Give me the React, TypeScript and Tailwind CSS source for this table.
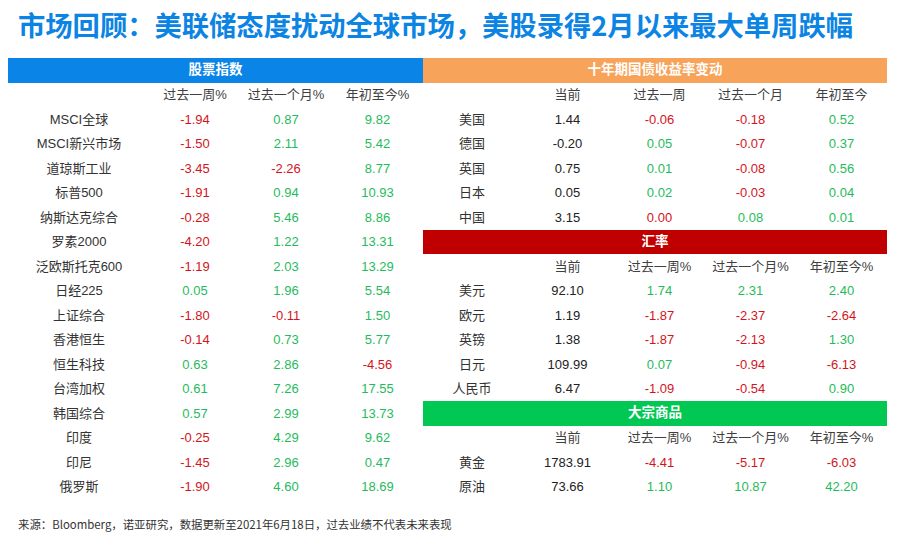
const UP = "text-[#1fbb5c]";
const DOWN = "text-[#d4141c]";

type Row = { name: string; vals: string[] };

const equities: Row[] = [
  { name: "MSCI全球", vals: ["-1.94", "0.87", "9.82"] },
  { name: "MSCI新兴市场", vals: ["-1.50", "2.11", "5.42"] },
  { name: "道琼斯工业", vals: ["-3.45", "-2.26", "8.77"] },
  { name: "标普500", vals: ["-1.91", "0.94", "10.93"] },
  { name: "纳斯达克综合", vals: ["-0.28", "5.46", "8.86"] },
  { name: "罗素2000", vals: ["-4.20", "1.22", "13.31"] },
  { name: "泛欧斯托克600", vals: ["-1.19", "2.03", "13.29"] },
  { name: "日经225", vals: ["0.05", "1.96", "5.54"] },
  { name: "上证综合", vals: ["-1.80", "-0.11", "1.50"] },
  { name: "香港恒生", vals: ["-0.14", "0.73", "5.77"] },
  { name: "恒生科技", vals: ["0.63", "2.86", "-4.56"] },
  { name: "台湾加权", vals: ["0.61", "7.26", "17.55"] },
  { name: "韩国综合", vals: ["0.57", "2.99", "13.73"] },
  { name: "印度", vals: ["-0.25", "4.29", "9.62"] },
  { name: "印尼", vals: ["-1.45", "2.96", "0.47"] },
  { name: "俄罗斯", vals: ["-1.90", "4.60", "18.69"] },
];

const bonds: Row[] = [
  { name: "美国", vals: ["1.44", "-0.06", "-0.18", "0.52"] },
  { name: "德国", vals: ["-0.20", "0.05", "-0.07", "0.37"] },
  { name: "英国", vals: ["0.75", "0.01", "-0.08", "0.56"] },
  { name: "日本", vals: ["0.05", "0.02", "-0.03", "0.04"] },
  { name: "中国", vals: ["3.15", "0.00", "0.08", "0.01"] },
];

const fx: Row[] = [
  { name: "美元", vals: ["92.10", "1.74", "2.31", "2.40"] },
  { name: "欧元", vals: ["1.19", "-1.87", "-2.37", "-2.64"] },
  { name: "英镑", vals: ["1.38", "-1.87", "-2.13", "1.30"] },
  { name: "日元", vals: ["109.99", "0.07", "-0.94", "-6.13"] },
  { name: "人民币", vals: ["6.47", "-1.09", "-0.54", "0.90"] },
];

const commodities: Row[] = [
  { name: "黄金", vals: ["1783.91", "-4.41", "-5.17", "-6.03"] },
  { name: "原油", vals: ["73.66", "1.10", "10.87", "42.20"] },
];

// 中国 0.00 is shown red in the source
function tone(v: string, forceDown?: boolean) {
  if (forceDown || v.startsWith("-")) return DOWN;
  return UP;
}

function Bar({ title, color }: { title: string; color: string }) {
  return (
    <div
      className={`h-[24.5px] flex items-center justify-center text-white font-bold text-[13.5px] ${color}`}
    >
      {title}
    </div>
  );
}

const rightCols = "grid grid-cols-[98px_93px_91px_91px_91px]";
const leftCols = "grid grid-cols-[142px_90px_92px_91px]";

function RightHeader({ labels }: { labels: string[] }) {
  return (
    <div className={`${rightCols} h-[24.5px] items-center text-center text-[13px] text-[#404040]`}>
      <span />
      {labels.map((l) => (
        <span key={l}>{l}</span>
      ))}
    </div>
  );
}

function RightRows({ rows, redZero }: { rows: Row[]; redZero?: boolean }) {
  return (
    <>
      {rows.map((r) => (
        <div
          key={r.name}
          className={`${rightCols} h-[24.5px] items-center text-center text-[13px]`}
        >
          <span className="text-[#333]">{r.name}</span>
          <span className="text-[#222]">{r.vals[0]}</span>
          {r.vals.slice(1).map((v, i) => (
            <span key={i} className={tone(v, redZero && r.name === "中国" && i === 0)}>
              {v}
            </span>
          ))}
        </div>
      ))}
    </>
  );
}

export default function App() {
  return (
    <div
      className="w-[903px] h-[539px] bg-white overflow-hidden"
      style={{ fontFamily: '"Liberation Sans", "Noto Sans CJK SC", sans-serif' }}
    >
      <div className="h-[58px] pt-[6px] pl-[18px]">
        <h1
          className="text-[27.3px] leading-[36px] font-bold text-[#0b84e3] whitespace-nowrap"
          style={{ fontFamily: '"Noto Sans CJK SC", sans-serif' }}
        >
          市场回顾：美联储态度扰动全球市场，美股录得2月以来最大单周跌幅
        </h1>
      </div>

      <div className="flex pl-[8px]">
        {/* equities */}
        <div className="w-[415px]">
          <Bar title="股票指数" color="bg-[#0a84e6]" />
          <div className={`${leftCols} h-[24.5px] items-center text-center text-[13px] text-[#404040]`}>
            <span />
            <span>过去一周%</span>
            <span>过去一个月%</span>
            <span>年初至今%</span>
          </div>
          {equities.map((r) => (
            <div
              key={r.name}
              className={`${leftCols} h-[24.5px] items-center text-center text-[13px]`}
            >
              <span className="text-[#333]">{r.name}</span>
              {r.vals.map((v, i) => (
                <span key={i} className={tone(v)}>
                  {v}
                </span>
              ))}
            </div>
          ))}
        </div>

        {/* bonds, fx, commodities */}
        <div className="w-[464px]">
          <Bar title="十年期国债收益率变动" color="bg-[#f7a359]" />
          <RightHeader labels={["当前", "过去一周", "过去一个月", "年初至今"]} />
          <RightRows rows={bonds} redZero />
          <Bar title="汇率" color="bg-[#c00000]" />
          <RightHeader labels={["当前", "过去一周%", "过去一个月%", "年初至今%"]} />
          <RightRows rows={fx} />
          <Bar title="大宗商品" color="bg-[#00c853]" />
          <RightHeader labels={["当前", "过去一周%", "过去一个月%", "年初至今%"]} />
          <RightRows rows={commodities} />
        </div>
      </div>

      <p
        className="mt-[17px] pl-[18px] text-[11.4px] leading-[16px] text-[#333]"
        style={{ fontFamily: '"Noto Sans CJK SC", sans-serif' }}
      >
        来源：Bloomberg，诺亚研究，数据更新至2021年6月18日，过去业绩不代表未来表现
      </p>
    </div>
  );
}
